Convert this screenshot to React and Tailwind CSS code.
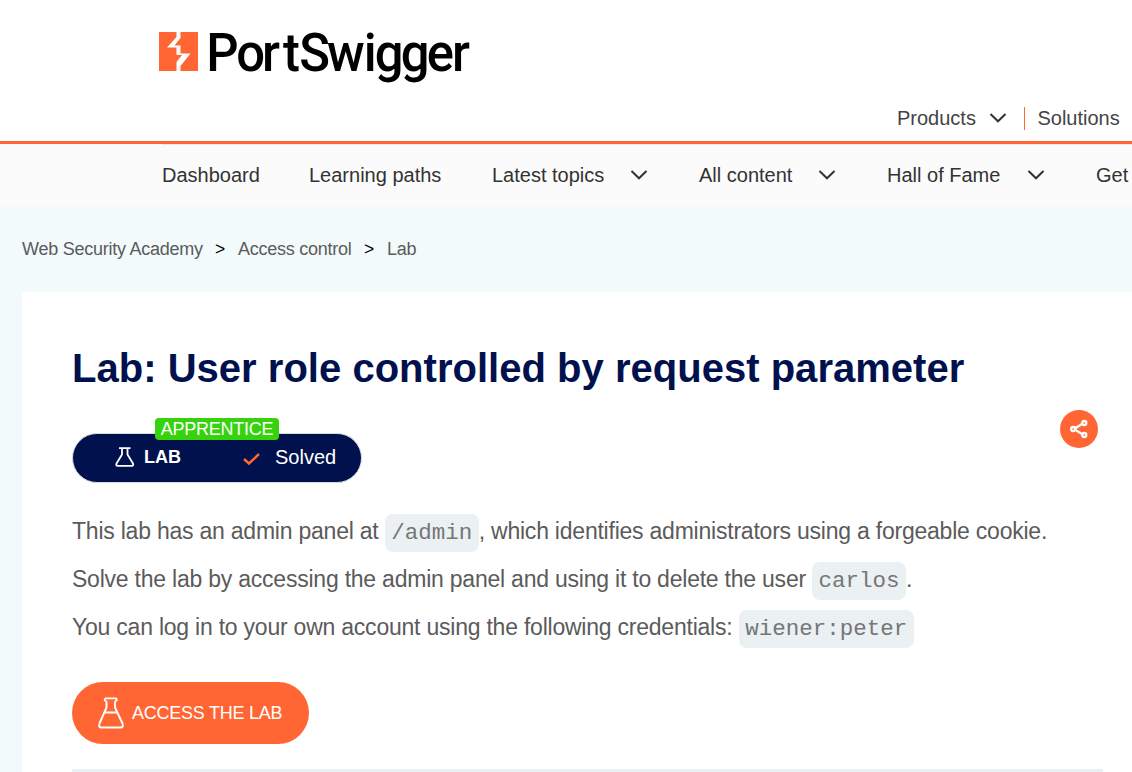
const Chevron = ({ className }) => (
  <svg className={className} width="18" height="12" viewBox="0 0 18 12" fill="none" stroke="#333332" strokeWidth="2">
    <path d="M1.5 2 L9 9.3 L16.5 2" />
  </svg>
);

const Logo = () => (
  <svg width="330" height="82" viewBox="0 -14 330 82" role="img" aria-label="PortSwigger">
    <rect x="0" y="3" width="39" height="39" fill="#ff6633" />
    <path
      d="M17.5 3 V8 L8 18.5 H17.5 V26 H23 L17.5 33 V42 H21.5 V37 L31.5 24.5 H21.5 V16.5 H15.5 L21.5 9 V3 Z"
      fill="#fff"
    />
    <text
      transform="translate(0 41.7) scale(0.94 1)"
      x="50.4 82.2 109.6 131.8 149.2 178.8 217.8 229.6 257.2 284.8 311.8"
      y="0"
      className="font-['Roboto',sans-serif] text-[54px] font-medium"
      fill="#000"
    >
      PortSwigger
    </text>
  </svg>
);

const Code = ({ children }) => (
  <code className="inline-block h-[38px] rounded-[8px] bg-[#ebf0f3] px-[6.5px] font-['Liberation_Mono',monospace] text-[22.5px] leading-[38px] tracking-normal text-[#747678]">
    {children}
  </code>
);

export default function App() {
  return (
    <div className="flex h-[772px] w-[1132px] flex-col overflow-hidden bg-white font-['Liberation_Sans',Arial,sans-serif] whitespace-nowrap">
      <header className="h-[141px] shrink-0 pt-[15px]">
        <div className="h-[80px] pl-[159px]">
          <Logo />
        </div>
        <div className="flex h-[46px] items-center pl-[897px] text-[20px] text-[#444]">
          <span>Products</span>
          <Chevron className="ml-[13px]" />
          <span className="ml-[17px] h-[23px] w-px bg-[#ff6633]" />
          <span className="ml-[12.5px]">Solutions</span>
        </div>
      </header>
      <nav className="h-[66px] shrink-0 border-t-[3px] border-[#ff6633] bg-[#fbfbfb]">
        <div className="ml-[162px] flex h-[63px] items-center border-t border-[#ebebe8] pb-[3px] text-[20px] text-[#333332]">
          <span className="w-[147px]">Dashboard</span>
          <span className="w-[183px]">Learning paths</span>
          <span className="w-[138px]">Latest topics</span>
          <Chevron className="mr-[51px]" />
          <span className="w-[119px]">All content</span>
          <Chevron className="mr-[51px]" />
          <span className="w-[140px]">Hall of Fame</span>
          <Chevron className="mr-[51px]" />
          <span>Get</span>
        </div>
      </nav>
      <main className="flex-1 bg-[#f2fafc] pl-[22px]">
        <div className="flex h-[85px] items-center text-[18px] tracking-[-0.25px] text-[#5b5b5b]">
          <span className="w-[193px]">Web Security Academy</span>
          <span className="w-[23px] text-[17.5px] text-black">&gt;</span>
          <span className="w-[126px]">Access control</span>
          <span className="w-[23px] text-[17.5px] text-black">&gt;</span>
          <span>Lab</span>
        </div>
        <section className="h-[480px] bg-white pl-[50px] pt-[52px]">
          <h1 className="h-[66px] text-[40px] leading-[48px] font-bold tracking-[0.02px] text-[#00114e]">
            Lab: User role controlled by request parameter
          </h1>
          <div className="flex h-[97px] items-start justify-between pr-[34px]">
            <div className="relative mt-[23px] flex h-[50px] w-[290px] items-center rounded-full border border-[#d5dce0] bg-[#00114e] pb-[3px] text-white">
              <span className="absolute top-[-16px] left-[82px] h-[22px] w-[124px] rounded-[4px] bg-[#36d30d] text-center text-[18px] leading-[22px] tracking-[-0.25px]">
                APPRENTICE
              </span>
              <svg className="ml-[42px]" width="20" height="20" viewBox="0 0 20 20" fill="none" stroke="#fff" strokeWidth="1.8" strokeLinejoin="round">
                <path d="M4 1.2 H15.5 M7 1.2 V7.5 L1.5 16.5 Q.7 18.8 2.8 18.8 H16.7 Q18.8 18.8 18 16.5 L12.5 7.5 V1.2" />
              </svg>
              <span className="relative top-px ml-[9px] w-[99px] text-[18px] font-bold">LAB</span>
              <svg width="17" height="14" viewBox="0 0 17 14" className="relative top-[2px]" fill="none" stroke="#ff6633" strokeWidth="2.5">
                <path d="M1 7 L6 11.5 L16 2" />
              </svg>
              <span className="ml-[15px] text-[20px]">Solved</span>
            </div>
            <span className="flex size-[38px] items-center justify-center rounded-full bg-[#ff6633]">
              <svg width="18" height="20" viewBox="0 0 18 20" fill="none" stroke="#fff" strokeWidth="2.3">
                <path d="M5.5 9 L12 5 M5.5 11 L12 15" />
                <circle cx="3.2" cy="10" r="2" />
                <circle cx="14.3" cy="4" r="2" />
                <circle cx="14.3" cy="16" r="2" />
              </svg>
            </span>
          </div>
          <div className="text-[23px] leading-[48px] tracking-[-0.225px] text-[#5b5b5b]">
            <p className="h-[48px]">This lab has an admin panel at <Code>/admin</Code>, which identifies administrators using a forgeable cookie.</p>
            <p className="h-[48px]">Solve the lab by accessing the admin panel and using it to delete the user <Code>carlos</Code>.</p>
            <p className="h-[48px]">You can log in to your own account using the following credentials: <Code>wiener:peter</Code></p>
          </div>
          <button className="mt-[31px] flex h-[62px] w-[237px] items-center rounded-full bg-[#ff6633] pl-[26px] text-[18px] text-white">
            <svg width="26" height="32" viewBox="0 0 26 32" fill="none" stroke="#fff" strokeWidth="1.9" strokeLinejoin="round">
              <path d="M8.5 4.2 Q5.5 3.8 7.5 1.4 H18 Q20 3.8 17 4.2 M8.5 4.2 V10.5 L1.5 26.5 Q.3 30.5 3.5 30.5 H22.5 Q25.7 30.5 24.5 26.5 L17 10.5 V4.2 M7 15.5 H19" />
            </svg>
            <span className="ml-[8px] tracking-[-0.25px]">ACCESS THE LAB</span>
          </button>
          <div className="mt-[25px] h-[3px] w-[1031px] bg-[#ebf0f3]" />
        </section>
      </main>
    </div>
  );
}
